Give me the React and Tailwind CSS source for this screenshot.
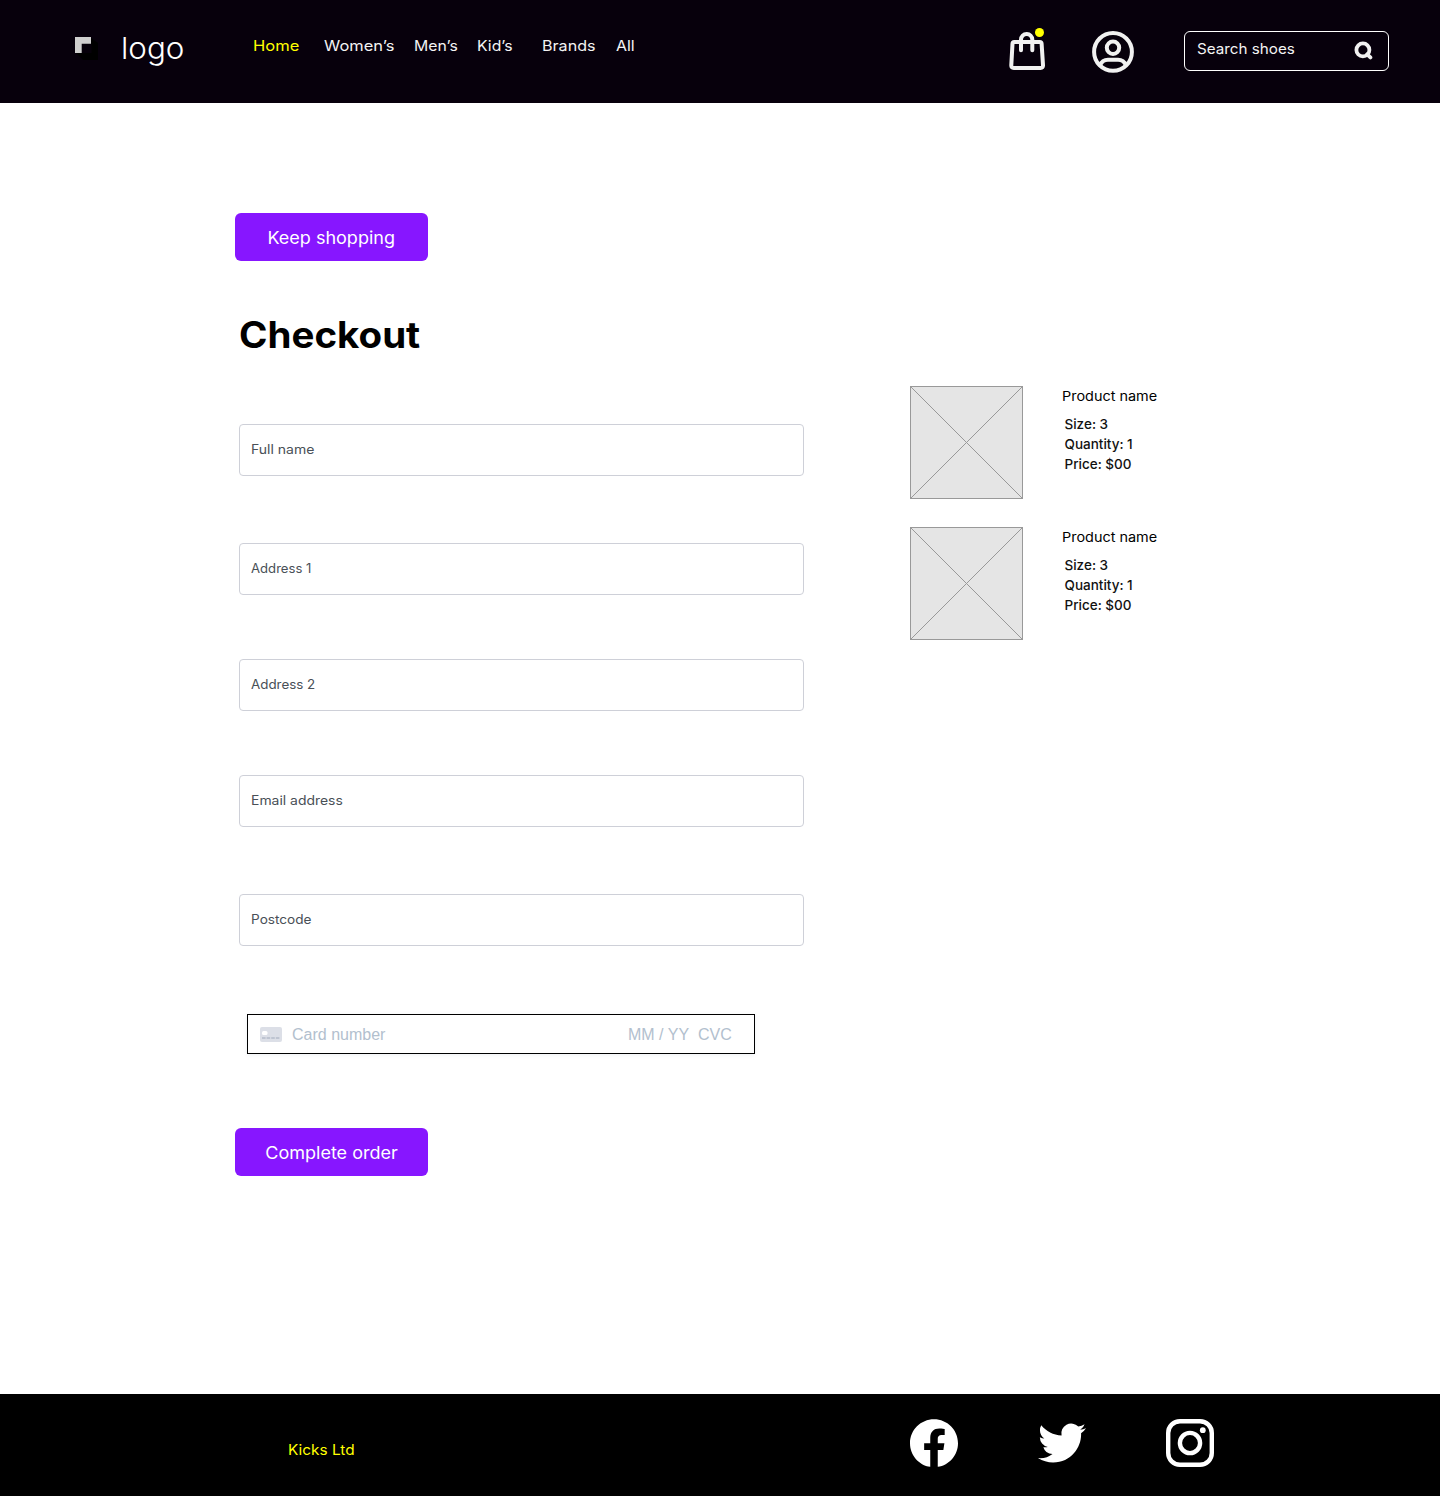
const navItems = [
  { label: "Home", cell: "w-[71px]", cls: "scale-x-[1.14] text-[#ffff00]" },
  { label: "Women’s", cell: "w-[90px]", cls: "scale-x-[1.135]" },
  { label: "Men’s", cell: "w-[63.5px]", cls: "scale-x-[1.09]" },
  { label: "Kid’s", cell: "w-[64.5px]", cls: "scale-x-[1.09]" },
  { label: "Brands", cell: "w-[74px]", cls: "scale-x-[1.11]" },
  { label: "All", cell: "", cls: "scale-x-[1.1]" },
];

const fields = [
  { label: "Full name", cls: "mt-[66px]", stretch: "scale-x-[1.12]" },
  { label: "Address 1", cls: "mt-[67px]", stretch: "scale-x-[1.05]" },
  { label: "Address 2", cls: "mt-16", stretch: "scale-x-[1.07]" },
  { label: "Email address", cls: "mt-16", stretch: "scale-x-[1.115]" },
  { label: "Postcode", cls: "mt-[67px]", stretch: "scale-x-[1.09]" },
];

function LogoMark() {
  return (
    <svg className="mt-[37px] h-[23px] w-6 shrink-0" viewBox="0 0 24 23">
      <path d="M16 1 23 6V23H8L1 16Z" fill="#000" />
      <path d="M7 7H16.5V16H7Z" fill="#06000a" />
      <path d="M0 0H16V6.7H6.7V16H0Z" fill="#cfcfcf" />
    </svg>
  );
}

function BagIcon() {
  return (
    <svg className="h-[38px] w-9" viewBox="0 0 36 38" fill="none" stroke="#f1f1f1" strokeWidth="4" strokeLinecap="round" strokeLinejoin="round">
      <path d="M5.2 10H30.8Q32.5 10 32.6 11.7L34 33Q34.2 36 31.5 36H4.8Q2.1 36 2.3 33L3.5 11.7Q3.6 10 5.2 10Z" />
      <path d="M12 18.3V7.6A5.6 5.6 0 0 1 17.6 2A5.6 5.6 0 0 1 23.3 7.6V18.3" />
    </svg>
  );
}

function AccountIcon() {
  return (
    <svg className="mt-[31px] h-[42px] w-[42px] shrink-0" viewBox="0 0 42 42" fill="none" stroke="#f1f1f1" strokeWidth="4">
      <circle cx="21" cy="20.9" r="18.9" />
      <circle cx="21" cy="16.8" r="6.2" />
      <path d="M8 34.4Q10.2 28.8 16 28.8H26Q31.8 28.8 34 34.4" />
    </svg>
  );
}

function SearchIcon() {
  return (
    <svg className="mt-[9px] mr-[15px] h-[19px] w-[19px]" viewBox="0 0 19 19" fill="none" stroke="#f1f1f1" strokeWidth="3.8" strokeLinecap="round">
      <circle cx="8.9" cy="8.9" r="6.5" />
      <path d="M13.2 13.3 16.4 16.4" />
    </svg>
  );
}

function CardIcon() {
  return (
    <svg className="h-[15px] w-[22px]" viewBox="0 0 22 15">
      <rect width="22" height="15" rx="2" fill="#dcdfe7" />
      <rect x="2" y="4" width="5.5" height="4" rx="1.5" fill="#fff" />
      <path d="M2 11H20" stroke="#b4bcca" strokeWidth="1.4" strokeDasharray="3.6 1" />
    </svg>
  );
}

function PurpleButton({ className, children }) {
  return (
    <button className={"flex h-12 w-[193px] items-center justify-center rounded-md bg-[#8716ff] pt-px text-[17px] leading-6 font-normal text-white " + className}>
      <span className="scale-x-[1.06]">{children}</span>
    </button>
  );
}

function Product({ className }) {
  return (
    <article className={"flex " + className}>
      <svg className="h-[113px] w-[113px]" viewBox="0 0 113 113" fill="#e5e5e5" stroke="#999">
        <rect x="0.5" y="0.5" width="112" height="112" />
        <path d="M0.5 0.5 112.5 112.5M112.5 0.5 0.5 112.5" />
      </svg>
      <div className="ml-[38.5px]">
        <h2 className="w-[87px] origin-left scale-x-[1.11] text-[13px] leading-5 font-normal whitespace-nowrap">Product name</h2>
        <div className="mt-2 ml-[3px] text-[13.5px] leading-5 font-medium text-[#111]">
          <p>Size: 3</p>
          <p>Quantity: 1</p>
          <p>Price: $00</p>
        </div>
      </div>
    </article>
  );
}

export default function App() {
  return (
    <div className="flex h-[1496px] w-[1440px] flex-col bg-white font-['Inter',sans-serif] text-black">
      <header className="flex h-[103px] items-start bg-[#07000c] pl-[75px] text-[#f3f3f3]">
        <LogoMark />
        <span className="mt-7 ml-[21.5px] w-[132px] text-[30px] leading-10 font-light text-white">
          <span className="inline-block origin-left scale-x-[1.045]">logo</span>
        </span>
        <nav className="mt-9 flex w-[756.5px] text-[14.5px] leading-5 font-normal">
          {navItems.map((n) => (
            <div key={n.label} className={"shrink-0 " + n.cell}>
              <a className={"inline-block origin-left " + n.cls}>{n.label}</a>
            </div>
          ))}
        </nav>
        <div className="relative mt-8 mr-[47px] shrink-0">
          <BagIcon />
          <span className="absolute -top-1 left-[26px] h-[9px] w-[9px] rounded-full bg-[#ffff00]" />
        </div>
        <AccountIcon />
        <div className="mt-[31px] ml-[50px] flex h-10 w-[205px] items-start justify-between rounded-md border border-white pl-3">
          <span className="mt-[7px] origin-left scale-x-[1.05] text-[14.5px] leading-5">Search shoes</span>
          <SearchIcon />
        </div>
      </header>

      <main className="flex flex-1 items-start pl-[235px]">
        <section className="w-[675px] pt-[110px]">
          <PurpleButton className="">Keep shopping</PurpleButton>
          <div className="pl-1">
            <h1 className="mt-[51px] w-[172px] origin-left scale-x-[1.055] text-[36.5px] leading-[46px] font-bold">Checkout</h1>
            {fields.map((f) => (
              <div key={f.label} className={"flex h-[52px] w-[565px] items-center rounded-[4px] border border-[#ced0d8] pl-[11px] text-[12.5px] text-[#495057] " + f.cls}>
                <span className={"origin-left " + f.stretch}>{f.label}</span>
              </div>
            ))}
            <div className="mt-[68px] ml-2 flex h-10 w-[508px] items-center border border-black pl-3 font-['Liberation_Sans',sans-serif] text-base text-[#b2c0ce] shadow-[0_1px_4px_rgba(207,215,223,0.35)]">
              <CardIcon />
              <span className="ml-2.5 w-[336px] pt-0.5">Card number</span>
              <span className="w-[70px] pt-0.5">MM / YY</span>
              <span className="pt-0.5">CVC</span>
            </div>
          </div>
          <PurpleButton className="mt-[74px]">Complete order</PurpleButton>
        </section>
        <aside className="pt-[283px]">
          <Product className="" />
          <Product className="mt-7" />
        </aside>
      </main>

      <footer className="flex h-[102px] items-start bg-black">
        <div className="mt-[46px] ml-[287.5px] w-[622.5px] text-[14.5px] leading-5 font-normal text-[#ffff00]">
          <span className="inline-block origin-left scale-x-[1.06]">Kicks Ltd</span>
        </div>
        <div className="mt-[25px] flex gap-20 text-white">
          <svg className="h-12 w-12" viewBox="0 0 24 24" fill="currentColor">
            <path d="M24 12.073c0-6.627-5.373-12-12-12s-12 5.373-12 12c0 5.99 4.388 10.954 10.125 11.854v-8.385H7.078v-3.47h3.047V9.43c0-3.007 1.792-4.669 4.533-4.669 1.312 0 2.686.235 2.686.235v2.953H15.83c-1.491 0-1.956.925-1.956 1.874v2.25h3.328l-.532 3.47h-2.796v8.385C19.612 23.027 24 18.062 24 12.073z" />
          </svg>
          <svg className="h-12 w-12" viewBox="0 0 24 24" fill="currentColor">
            <path d="M23.953 4.57a10 10 0 01-2.825.775 4.958 4.958 0 002.163-2.723c-.951.555-2.005.959-3.127 1.184a4.92 4.92 0 00-8.384 4.482C7.69 8.095 4.067 6.13 1.64 3.162a4.822 4.822 0 00-.666 2.475c0 1.71.87 3.213 2.188 4.096a4.904 4.904 0 01-2.228-.616v.06a4.923 4.923 0 003.946 4.827 4.996 4.996 0 01-2.212.085 4.936 4.936 0 004.604 3.417 9.867 9.867 0 01-6.102 2.105c-.39 0-.779-.023-1.17-.067a13.995 13.995 0 007.557 2.209c9.053 0 13.998-7.496 13.998-13.985 0-.21 0-.42-.015-.63A9.935 9.935 0 0024 4.59z" />
          </svg>
          <svg className="h-12 w-12" viewBox="0 0 48 48" fill="none" stroke="currentColor" strokeWidth="4.4">
            <rect x="2.2" y="2.2" width="43.6" height="43.6" rx="11.8" />
            <circle cx="24" cy="24" r="10.1" />
            <circle cx="36.8" cy="11.2" r="2.9" fill="currentColor" stroke="none" />
          </svg>
        </div>
      </footer>
    </div>
  );
}
